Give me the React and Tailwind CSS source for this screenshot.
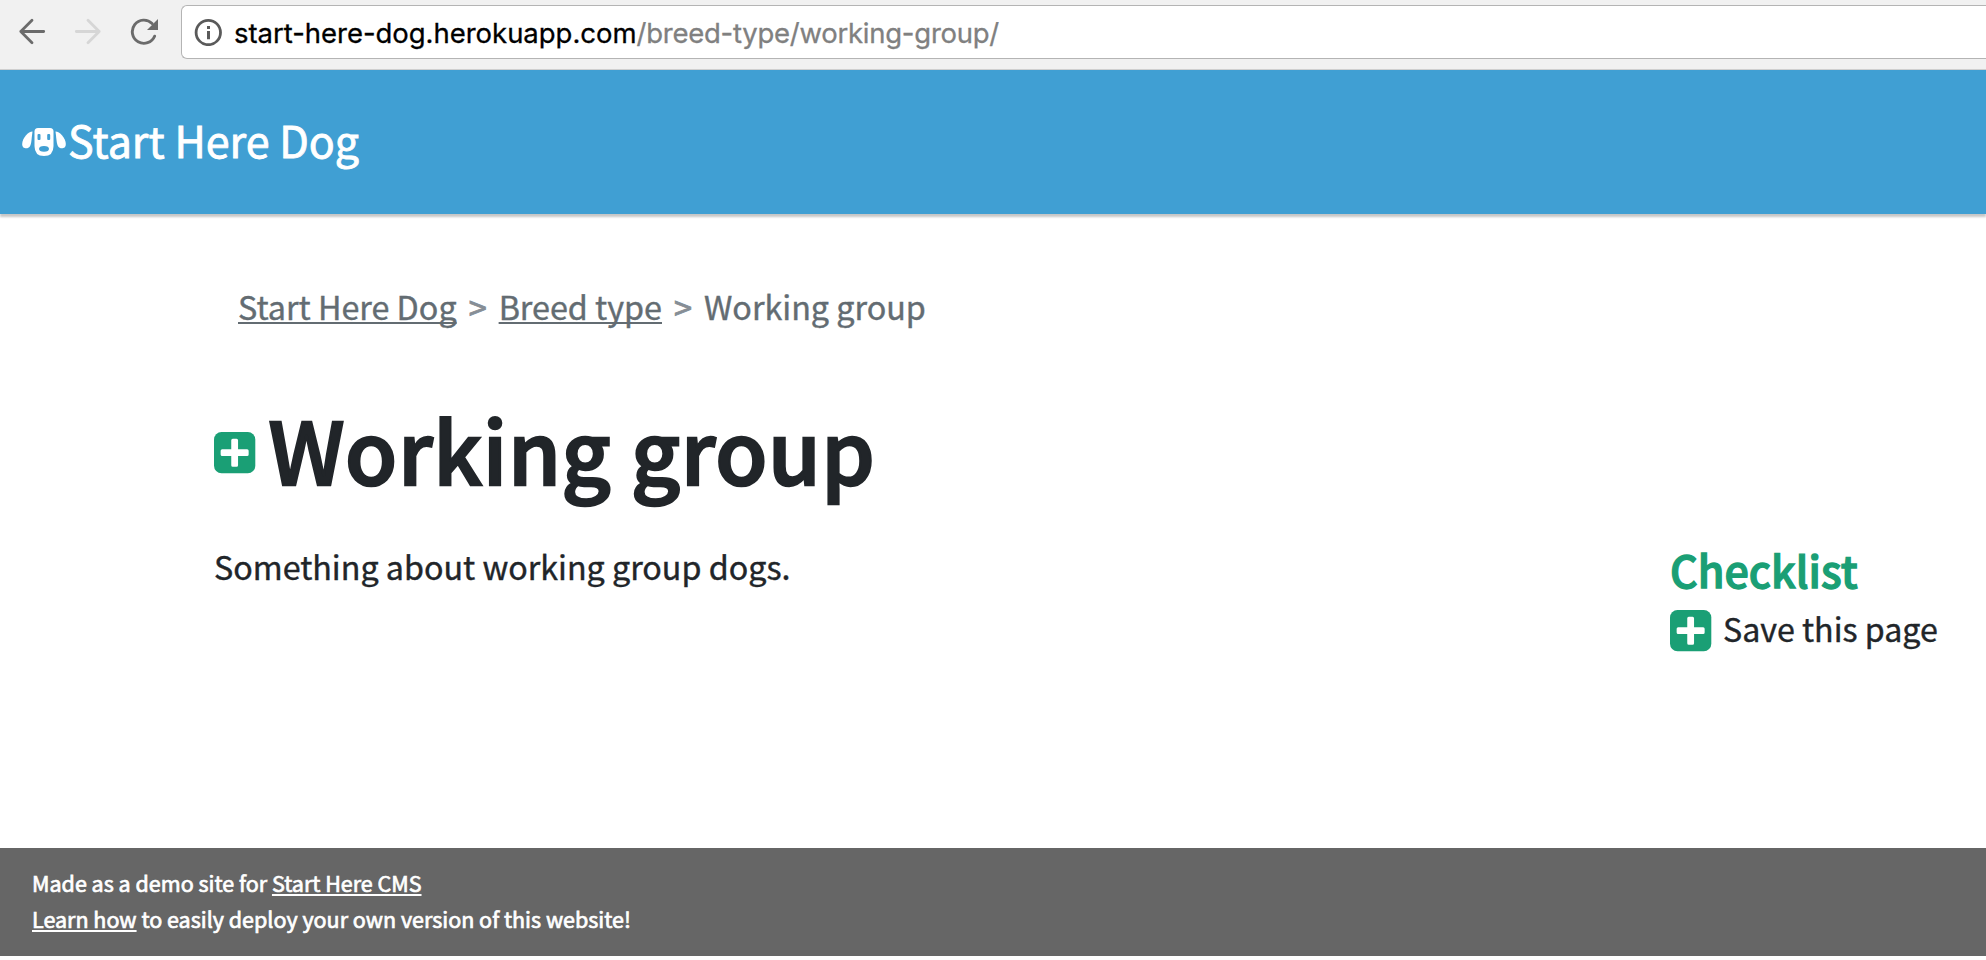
import React from "react";

function PlusIcon() {
  return (
    <svg viewBox="0 0 42 42" className="h-[42px] w-[42px] shrink-0">
      <rect x="0" y="0" width="41.3" height="41.3" rx="7.500" fill="#1a9f75" />
      <path transform="translate(-0.35 -0.35)" d="M17.600 8.500a1.500 1.500 0 0 1 1.500-1.500h3.800a1.500 1.500 0 0 1 1.500 1.500v9.100h9.100a1.500 1.500 0 0 1 1.500 1.500v3.800a1.500 1.500 0 0 1-1.500 1.500h-9.100v9.100a1.500 1.500 0 0 1-1.500 1.500h-3.800a1.500 1.500 0 0 1-1.500-1.500v-9.100h-9.100a1.500 1.500 0 0 1-1.500-1.500v-3.800a1.500 1.500 0 0 1 1.500-1.500h9.100z" fill="#fff" />
    </svg>
  );
}

function DogIcon() {
  return (
    <svg viewBox="0 0 46 30" className="h-[30px] w-[46px] shrink-0 blur-[0.7px]">
      <path d="M11.500 4.500C7.500 4.500 1.200 11 1.200 17C1.200 20.300 3 21.300 5.200 21.300C8.500 21.300 9.800 18.500 10.300 14.500Z" fill="#fff" />
      <path d="M34.500 4.500C38.500 4.500 44.800 11 44.800 17C44.800 20.300 43 21.300 40.800 21.300C37.500 21.300 36.200 18.500 35.700 14.500Z" fill="#fff" />
      <path d="M17 1h12q3.500 0 3.500 3.500V19q0 10-9.500 10t-9.500-10V4.500Q13.500 1 17 1Z" fill="#fff" />
      <rect x="16.500" y="7" width="3" height="6" rx="1" fill="#409fd3" />
      <rect x="26.200" y="7" width="3" height="6" rx="1" fill="#409fd3" />
      <ellipse cx="23" cy="21.800" rx="5" ry="2.900" fill="#409fd3" />
    </svg>
  );
}

function BackIcon() {
  return (
    <svg viewBox="0 0 28 28" className="h-7 w-7" fill="none" stroke="#6b6b6b" strokeWidth="2.8" strokeLinecap="round" strokeLinejoin="round">
      <path d="M14 3.200L2.800 14.500L14 25.800M2.800 14.500H25.700" />
    </svg>
  );
}

function ForwardIcon() {
  return (
    <svg viewBox="0 0 28 28" className="h-7 w-7" fill="none" stroke="#d6d6d6" strokeWidth="2.8" strokeLinecap="round" strokeLinejoin="round">
      <path d="M14 3.200L25.200 14.500L14 25.800M2.300 14.500H25.200" />
    </svg>
  );
}

function ReloadIcon() {
  return (
    <svg viewBox="0 0 28 28" className="h-7 w-7">
      <path d="M24.600 19.200A11.600 11.600 0 1 1 22.100 6.500" fill="none" stroke="#6b6b6b" strokeWidth="2.900" strokeLinecap="round" />
      <path d="M28 2V13H17Z" fill="#6b6b6b" />
    </svg>
  );
}

function InfoIcon() {
  return (
    <svg viewBox="0 0 28 28" className="h-7 w-7 shrink-0">
      <circle cx="14.300" cy="14.500" r="12.200" fill="none" stroke="#5a5a5a" strokeWidth="2.800" />
      <path d="M13 8h3v3h-3zM13 13h3v8.200h-3z" fill="#5a5a5a" />
    </svg>
  );
}

const link = "underline decoration-2 underline-offset-2 [text-decoration-skip-ink:none]";

export default function App() {
  return (
    <div className="flex h-[960px] w-full flex-col overflow-hidden bg-white font-['Noto_Sans_CJK_SC',sans-serif] text-[#212529]">
      <div className="flex h-[70px] shrink-0 items-start border-b border-[#cfcfcf] bg-[#f1f1f1] pt-[5px]">
        <div className="flex w-[181px] shrink-0 gap-7 pl-[18px] pt-3">
          <BackIcon />
          <ForwardIcon />
          <ReloadIcon />
        </div>
        <div className="flex h-[54px] flex-1 items-center rounded-l-[6px] border border-r-0 border-[#b4b4b4] bg-white pl-3 font-[Inter,sans-serif] text-[27.5px] leading-[54px] [-webkit-text-stroke:0.3px]">
          <InfoIcon />
          <div className="pl-[12px] pt-[2px]">
            <span className="tracking-[-0.03px] text-black">start-here-dog.herokuapp.com</span>
            <span className="tracking-[-0.25px] text-[#808080]">/breed-type/working-group/</span>
          </div>
        </div>
      </div>

      <header className="relative flex h-[144px] shrink-0 items-center bg-[#409fd3] pl-[21px] text-white shadow-[0_3px_2px_0_rgba(0,0,0,0.22)]">
        <DogIcon />
        <span className="pb-[7px] pl-px text-[43px] leading-[60px] [-webkit-text-stroke:0.8px]">Start Here Dog</span>
      </header>

      <main className="flex-1 pl-[214px] pt-[68px]">
        <nav className="flex pl-6 text-[32.3px] leading-[48px] text-[#636c72] [-webkit-text-stroke:0.4px]">
          <a className={link}>Start Here Dog</a>
          <span className="w-[42px] text-center text-[#868e96] [-webkit-text-stroke:0.9px]">&gt;</span>
          <a className={link}>Breed type</a>
          <span className="w-[42px] text-center text-[#868e96] [-webkit-text-stroke:0.9px]">&gt;</span>
          <span>Working group</span>
        </nav>

        <div className="mt-[68px] flex h-[102px] items-center">
          <div className="pt-[7px]"><PlusIcon /></div>
          <h1 className="pb-[2px] pl-[12.5px] text-[85px] font-medium leading-[102px] tracking-[0.6px] [-webkit-text-stroke:2.4px]">Working group</h1>
        </div>

        <div className="mt-[42px] flex">
          <p className="w-[1456px] text-[32.25px] leading-[48px] [-webkit-text-stroke:0.4px]">Something about working group dogs.</p>
          <aside>
            <h2 className="pt-[2px] text-[43px] font-medium leading-[50px] text-[#1a9f75] [-webkit-text-stroke:1.3px]">Checklist</h2>
            <div className="mt-[10px] flex h-12 items-start pt-[6px]">
              <PlusIcon />
              <span className="pl-[11px] text-[32.2px] leading-[36px] [-webkit-text-stroke:0.4px]">Save this page</span>
            </div>
          </aside>
        </div>
      </main>

      <footer className="mb-1 h-[108px] shrink-0 bg-[#666] pl-8 pt-[17px] text-[21.5px] leading-[35.7px] text-white [-webkit-text-stroke:0.7px]">
        <p>Made as a demo site for <a className={link}>Start Here CMS</a></p>
        <p><a className={link}>Learn how</a> to easily deploy your own version of this website!</p>
      </footer>
    </div>
  );
}
